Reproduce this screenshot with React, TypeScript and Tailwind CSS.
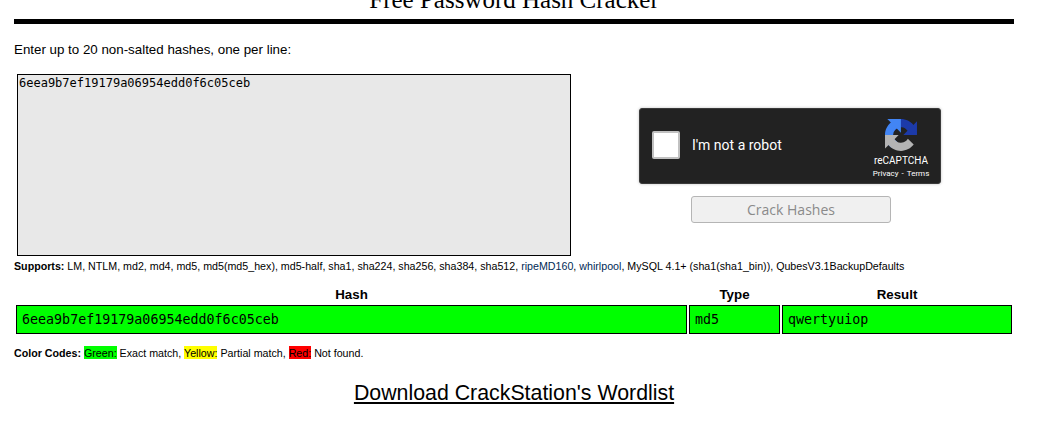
function RecaptchaLogo() {
  return (
    <svg width="32" height="32" viewBox="0 0 64 64" className="block">
      <path
        fill="#1c3aa9"
        d="M64 31.955l-.033-1.37V4.687l-7.16 7.16C50.948 4.674 42.033.093 32.05.093c-10.4 0-19.622 4.96-25.458 12.64l11.736 11.86a15.55 15.55 0 0 1 4.754-5.334c2.05-1.6 4.952-2.906 8.968-2.906.485 0 .86.057 1.135.163 4.976.393 9.288 3.14 11.828 7.124l-8.307 8.307 32.294.008"
      />
      <path
        fill="#4285f4"
        d="M31.862 0l-1.37.033H4.594l7.16 7.16C4.58 13.052 0 21.967 0 31.95c0 10.4 4.96 19.622 12.64 25.458L24.5 45.672a15.55 15.55 0 0 1-5.334-4.754c-1.6-2.05-2.906-4.952-2.906-8.968 0-.485.057-.86.163-1.135.393-4.976 3.14-9.288 7.124-11.828l8.307 8.307L31.862 0"
      />
      <path
        fill="#b4b4b4"
        d="M.001 31.95l.033 1.37v25.898l7.16-7.16c5.86 7.173 14.774 11.754 24.76 11.754 10.4 0 19.622-4.96 25.458-12.64l-11.736-11.86a15.55 15.55 0 0 1-4.754 5.334c-2.05 1.6-4.952 2.906-8.968 2.906-.485 0-.86-.057-1.135-.163-4.976-.393-9.288-3.14-11.828-7.124l8.307-8.307L0 31.95"
      />
    </svg>
  );
}

function Recaptcha() {
  return (
    <div className="flex h-[76px] w-[302px] rounded-[3px] border border-[#3a3a3a] bg-[#222222] font-['Roboto',sans-serif] text-white shadow-[0_0_3px_rgba(0,0,0,0.25)]">
      <div className="mt-[22px] ml-[12px] h-[28px] w-[28px] rounded-[2px] border-2 border-[#c1c1c1] bg-white" />
      <div className="mt-[28px] ml-[12px] flex-1 text-[14px] leading-[16px]">I'm not a robot</div>
      <div className="mr-[10px] flex w-[58px] flex-col items-center pt-[10px]">
        <RecaptchaLogo />
        <div className="mt-[2px] text-[10px] leading-[16px] whitespace-nowrap">reCAPTCHA</div>
        <div className="flex gap-[3px] text-[8px] leading-[10px] whitespace-nowrap">
          <span>Privacy</span>
          <span>-</span>
          <span>Terms</span>
        </div>
      </div>
    </div>
  );
}

const cellClass = "border border-black bg-[#00ff00] px-[5px] h-[29px] font-['DejaVu_Sans_Mono',monospace] text-[13.33px] text-left font-normal";
const headClass = "p-0 text-center text-[13.33px] font-bold leading-[16px]";

export default function App() {
  return (
    <div className="h-[430px] w-[1038px] overflow-hidden bg-white font-['Liberation_Sans',Arial,sans-serif] text-black">
      <div className="ml-[14px] w-[1000px]">
        <div className="h-[19px] overflow-hidden">
          <h1 className="mt-[-14px] text-center font-['Liberation_Serif',serif] text-[25px] leading-[28px] font-normal">
            Free Password Hash Cracker
          </h1>
        </div>
        <div className="h-[5px] bg-black" />

        <p className="mt-[18px] text-[13.33px] leading-[15px]">Enter up to 20 non-salted hashes, one per line:</p>

        <div className="mt-[17px] flex">
          <textarea
            readOnly
            spellCheck={false}
            defaultValue="6eea9b7ef19179a06954edd0f6c05ceb"
            className="ml-[3px] h-[182px] w-[554px] resize-none border border-black bg-[#e8e8e8] px-[1px] py-[1px] font-['DejaVu_Sans_Mono',monospace] text-[12px] leading-[14px] outline-none"
          />
          <div className="ml-[68px] pt-[34px]">
            <Recaptcha />
            <button
              disabled
              className="mt-[12px] ml-[52px] block h-[27px] w-[200px] rounded-[3px] border border-[#b5b5b5] bg-[#f0f0f0] font-['Open_Sans',sans-serif] text-[14px] text-[#8a8a8a]"
            >
              Crack Hashes
            </button>
          </div>
        </div>

        <p className="mt-[4px] text-[10.68px] leading-[12px]">
          <b>Supports:</b> LM, NTLM, md2, md4, md5, md5(md5_hex), md5-half, sha1, sha224, sha256, sha384, sha512,{" "}
          <span className="text-[#002a55]">ripeMD160</span>, <span className="text-[#002a55]">whirlpool</span>, MySQL 4.1+
          (sha1(sha1_bin)), QubesV3.1BackupDefaults
        </p>

        <table className="mt-[13px] w-[1000px] table-fixed border-separate border-spacing-[2px]">
          <colgroup>
            <col className="w-[671px]" />
            <col className="w-[91px]" />
            <col />
          </colgroup>
          <thead>
            <tr>
              <th className={headClass}>Hash</th>
              <th className={headClass}>Type</th>
              <th className={headClass}>Result</th>
            </tr>
          </thead>
          <tbody>
            <tr>
              <td className={cellClass}>6eea9b7ef19179a06954edd0f6c05ceb</td>
              <td className={cellClass}>md5</td>
              <td className={cellClass}>qwertyuiop</td>
            </tr>
          </tbody>
        </table>

        <p className="mt-[11px] text-[10.68px] leading-[12px]">
          <b>Color Codes:</b> <span className="bg-[#00ff00] pt-px">Green:</span> Exact match,{" "}
          <span className="bg-[#ffff00] pt-px">Yellow:</span> Partial match, <span className="bg-[#ff0000] pt-px">Red:</span> Not found.
        </p>

        <div className="mt-[22px] text-center text-[21.33px] leading-[25px] underline">
          Download CrackStation's Wordlist
        </div>
      </div>
    </div>
  );
}
